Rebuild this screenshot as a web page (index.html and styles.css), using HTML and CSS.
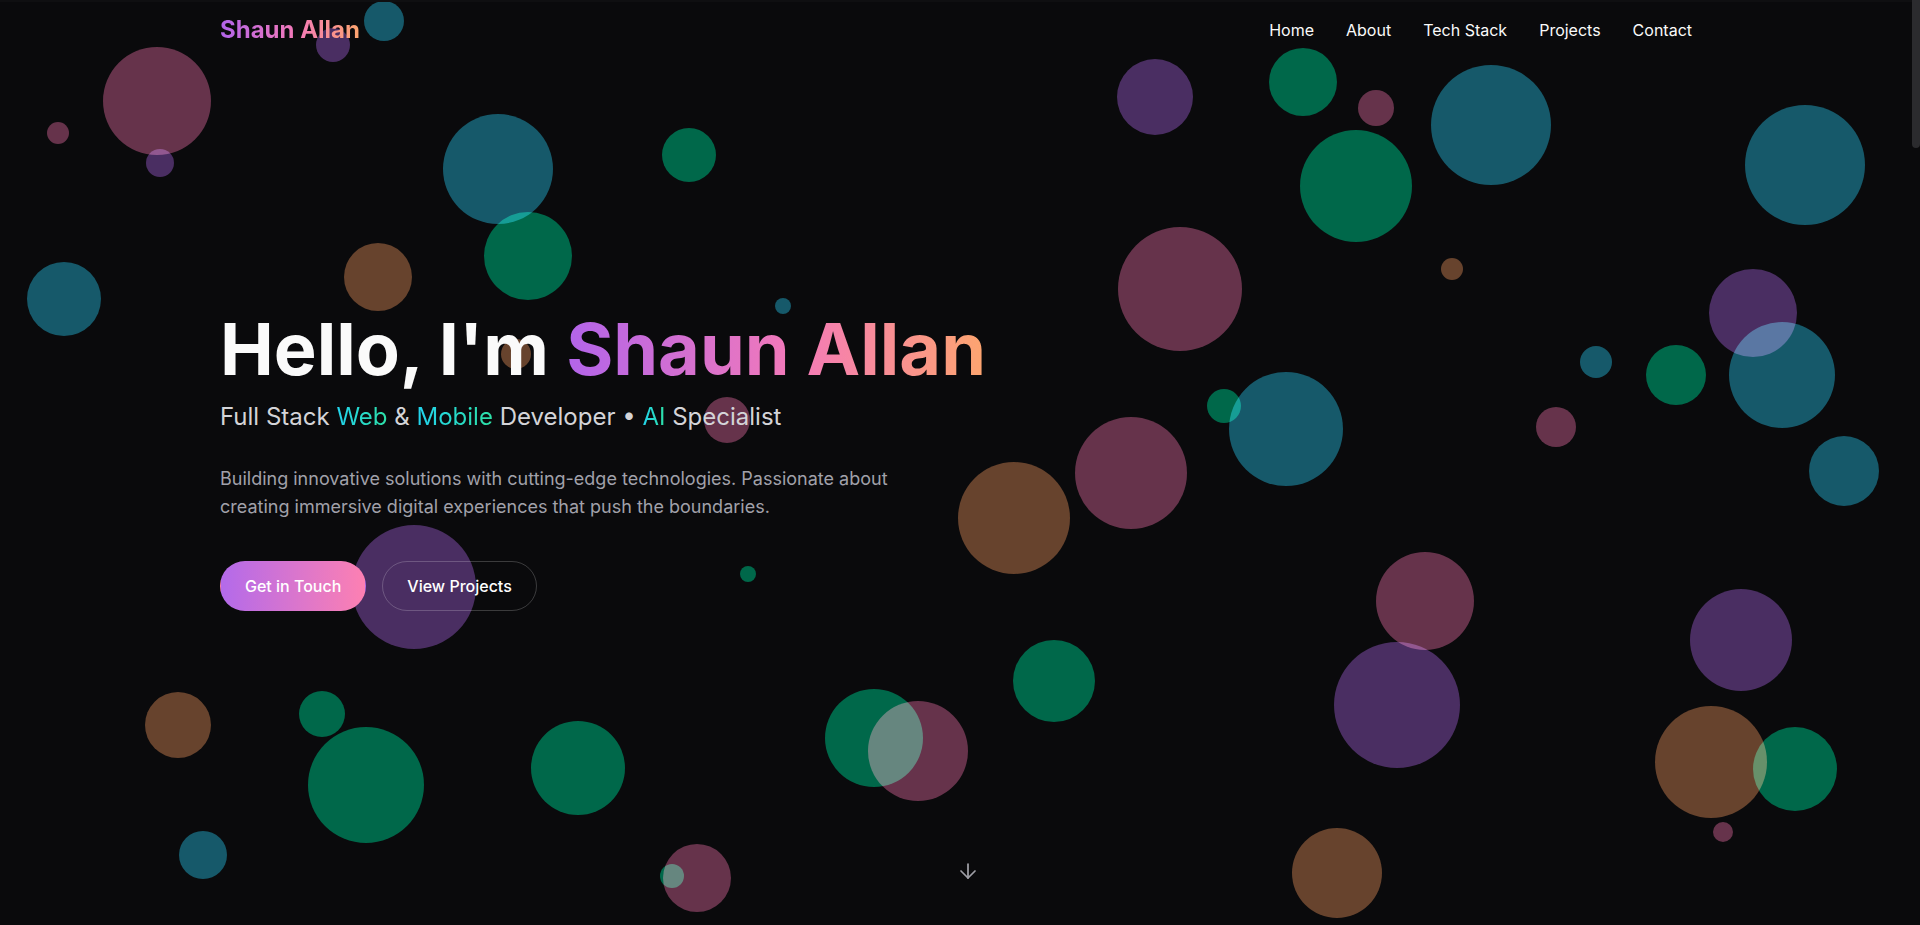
FILE: index.html
```html
<!DOCTYPE html>
<html lang="en">
<head>
<meta charset="utf-8">
<title>Shaun Allan</title>
<link rel="stylesheet" href="styles.css">
</head>
<body>
<div class="page">
  <main class="viewport">
    <div class="topline"></div>
    <div class="bubbles" aria-hidden="true">
      <span class="b teal" style="--x:384px;--y:21px;--r:20px"></span>
      <span class="b purple" style="--x:333px;--y:45px;--r:17px"></span>
      <span class="b pink" style="--x:157px;--y:101px;--r:54px"></span>
      <span class="b pink" style="--x:58px;--y:133px;--r:11px"></span>
      <span class="b purple" style="--x:160px;--y:163px;--r:14px"></span>
      <span class="b teal" style="--x:498px;--y:169px;--r:55px"></span>
      <span class="b green" style="--x:689px;--y:155px;--r:27px"></span>
      <span class="b green" style="--x:528px;--y:256px;--r:44px"></span>
      <span class="b brown" style="--x:378px;--y:277px;--r:34px"></span>
      <span class="b teal" style="--x:64px;--y:299px;--r:37px"></span>
      <span class="b teal" style="--x:783px;--y:306px;--r:8px"></span>
      <span class="b brown" style="--x:516px;--y:354px;--r:15px"></span>
      <span class="b pink" style="--x:727px;--y:420px;--r:23px"></span>
      <span class="b purple" style="--x:414px;--y:587px;--r:62px"></span>
      <span class="b green" style="--x:748px;--y:574px;--r:8px"></span>
      <span class="b brown" style="--x:178px;--y:725px;--r:33px"></span>
      <span class="b green" style="--x:322px;--y:714px;--r:23px"></span>
      <span class="b green" style="--x:366px;--y:785px;--r:58px"></span>
      <span class="b green" style="--x:578px;--y:768px;--r:47px"></span>
      <span class="b teal" style="--x:203px;--y:855px;--r:24px"></span>
      <span class="b pink" style="--x:697px;--y:878px;--r:34px"></span>
      <span class="b green" style="--x:672px;--y:876px;--r:12px"></span>
      <span class="b green" style="--x:874px;--y:738px;--r:49px"></span>
      <span class="b pink" style="--x:918px;--y:751px;--r:50px"></span>
      <span class="b brown" style="--x:1014px;--y:518px;--r:56px"></span>
      <span class="b pink" style="--x:1131px;--y:473px;--r:56px"></span>
      <span class="b green" style="--x:1054px;--y:681px;--r:41px"></span>
      <span class="b purple" style="--x:1155px;--y:97px;--r:38px"></span>
      <span class="b green" style="--x:1303px;--y:82px;--r:34px"></span>
      <span class="b pink" style="--x:1376px;--y:108px;--r:18px"></span>
      <span class="b green" style="--x:1356px;--y:186px;--r:56px"></span>
      <span class="b teal" style="--x:1491px;--y:125px;--r:60px"></span>
      <span class="b teal" style="--x:1805px;--y:165px;--r:60px"></span>
      <span class="b pink" style="--x:1180px;--y:289px;--r:62px"></span>
      <span class="b brown" style="--x:1452px;--y:269px;--r:11px"></span>
      <span class="b green" style="--x:1224px;--y:406px;--r:17px"></span>
      <span class="b teal" style="--x:1286px;--y:429px;--r:57px"></span>
      <span class="b teal" style="--x:1596px;--y:362px;--r:16px"></span>
      <span class="b green" style="--x:1676px;--y:375px;--r:30px"></span>
      <span class="b pink" style="--x:1556px;--y:427px;--r:20px"></span>
      <span class="b purple" style="--x:1753px;--y:313px;--r:44px"></span>
      <span class="b teal" style="--x:1782px;--y:375px;--r:53px"></span>
      <span class="b teal" style="--x:1844px;--y:471px;--r:35px"></span>
      <span class="b pink" style="--x:1425px;--y:601px;--r:49px"></span>
      <span class="b purple" style="--x:1397px;--y:705px;--r:63px"></span>
      <span class="b purple" style="--x:1741px;--y:640px;--r:51px"></span>
      <span class="b brown" style="--x:1711px;--y:762px;--r:56px"></span>
      <span class="b green" style="--x:1795px;--y:769px;--r:42px"></span>
      <span class="b pink" style="--x:1723px;--y:832px;--r:10px"></span>
      <span class="b brown" style="--x:1337px;--y:873px;--r:45px"></span>
    </div>

    <header class="navbar">
      <div class="container nav-inner">
        <a class="logo" href="#">Shaun Allan</a>
        <nav class="links">
          <a href="#">Home</a>
          <a href="#">About</a>
          <a href="#">Tech Stack</a>
          <a href="#">Projects</a>
          <a href="#">Contact</a>
        </nav>
      </div>
    </header>

    <section class="hero">
      <div class="container hero-inner">
        <h1 class="title">Hello, I'm <span class="grad">Shaun Allan</span></h1>
        <p class="subtitle">Full Stack <span class="hl">Web</span> &amp; <span class="hl">Mobile</span> Developer • <span class="hl">AI</span> Specialist</p>
        <p class="desc">Building innovative solutions with cutting-edge technologies. Passionate about creating immersive digital experiences that push the boundaries.</p>
        <div class="actions">
          <a class="btn btn-primary" href="#">Get in Touch</a>
          <a class="btn btn-ghost" href="#">View Projects</a>
        </div>
      </div>
    </section>

    <svg class="scroll-arrow" viewBox="0 0 24 24" fill="none" stroke="currentColor" stroke-width="1.75" stroke-linecap="round" stroke-linejoin="round" aria-hidden="true">
      <path d="M12 5v14"/>
      <path d="m19 12-7 7-7-7"/>
    </svg>
  </main>
  <div class="scrollbar"><div class="thumb"></div></div>
</div>
</body>
</html>
```

FILE: styles.css
```css
* { box-sizing: border-box; margin: 0; padding: 0; }

html, body {
  width: 100%;
  height: 100%;
  overflow: hidden;
  background: #0a0a0c;
}

body {
  font-family: Inter, "Noto Sans", "Liberation Sans", sans-serif;
  color: #fafafa;
}

a { color: inherit; text-decoration: none; }

.page {
  display: flex;
  height: 925px;
}

.viewport {
  position: relative;
  flex: 1;
  height: 925px;
  overflow: hidden;
  background: #0a0a0c;
}

.topline {
  position: absolute;
  top: 0;
  left: 0;
  right: 0;
  height: 2px;
  background: #0f0f11;
  z-index: 5;
}

.scrollbar {
  width: 8px;
  height: 925px;
  background: #0a0a0c;
}

.thumb {
  width: 8px;
  height: 148px;
  background: #2b2b2e;
  border-radius: 0 0 4px 4px;
}

/* Bubbles */
.bubbles {
  position: absolute;
  inset: 0;
  z-index: 0;
}

.b {
  position: absolute;
  left: calc(var(--x) - var(--r));
  top: calc(var(--y) - var(--r));
  width: calc(var(--r) * 2);
  height: calc(var(--r) * 2);
  border-radius: 50%;
  mix-blend-mode: screen;
}

.teal   { background: #16596a; }
.green  { background: #00684a; }
.pink   { background: #66334b; }
.purple { background: #4a2e62; }
.brown  { background: #67432d; }

/* Layout */
.container {
  width: 100%;
  max-width: 1536px;
  margin: 0 auto;
  padding: 0 32px;
}

.navbar {
  position: absolute;
  top: 0;
  left: 0;
  right: 0;
  z-index: 3;
  padding-top: 14px;
}

.nav-inner {
  display: flex;
  align-items: center;
  justify-content: space-between;
}

.logo {
  font-size: 24px;
  line-height: 32px;
  font-weight: 700;
  background: linear-gradient(to right, #b264ea, #f47ab8 55%, #fda56f);
  -webkit-background-clip: text;
  background-clip: text;
  color: transparent;
}

.links {
  display: flex;
  gap: 32px;
  font-size: 16px;
  line-height: 24px;
}

.links a { color: #fafafa; }

.hero {
  position: relative;
  z-index: 2;
  height: 923px;
  display: flex;
  align-items: center;
}

.title {
  font-size: 72px;
  line-height: 72px;
  font-weight: 700;
  color: #fafafa;
  margin-bottom: 16px;
}

.grad {
  background: linear-gradient(to right, #b264ea, #f47ab8 55%, #fda56f);
  -webkit-background-clip: text;
  background-clip: text;
  color: transparent;
}

.subtitle {
  font-size: 24px;
  line-height: 32px;
  color: #d4d4d8;
  margin-bottom: 32px;
}

.hl {
  background: linear-gradient(to right, #22d3ee, #2de0a6);
  -webkit-background-clip: text;
  background-clip: text;
  color: transparent;
}

.desc {
  max-width: 672px;
  font-size: 18px;
  line-height: 28px;
  color: #a1a1aa;
  margin-bottom: 40px;
}

.actions {
  display: flex;
  gap: 16px;
}

.btn {
  display: inline-block;
  padding: 12px 24px;
  border-radius: 9999px;
  font-size: 16px;
  line-height: 24px;
  font-weight: 500;
  border: 1px solid transparent;
  color: #ffffff;
}

.btn-primary {
  background: linear-gradient(to right, #b36aea, #fd80b2);
}

.btn-ghost {
  border-color: rgba(255, 255, 255, 0.2);
}

.scroll-arrow {
  position: absolute;
  z-index: 2;
  left: calc(50% - 12px + 12px);
  bottom: 42px;
  width: 24px;
  height: 24px;
  color: #9f9fa6;
}
```
